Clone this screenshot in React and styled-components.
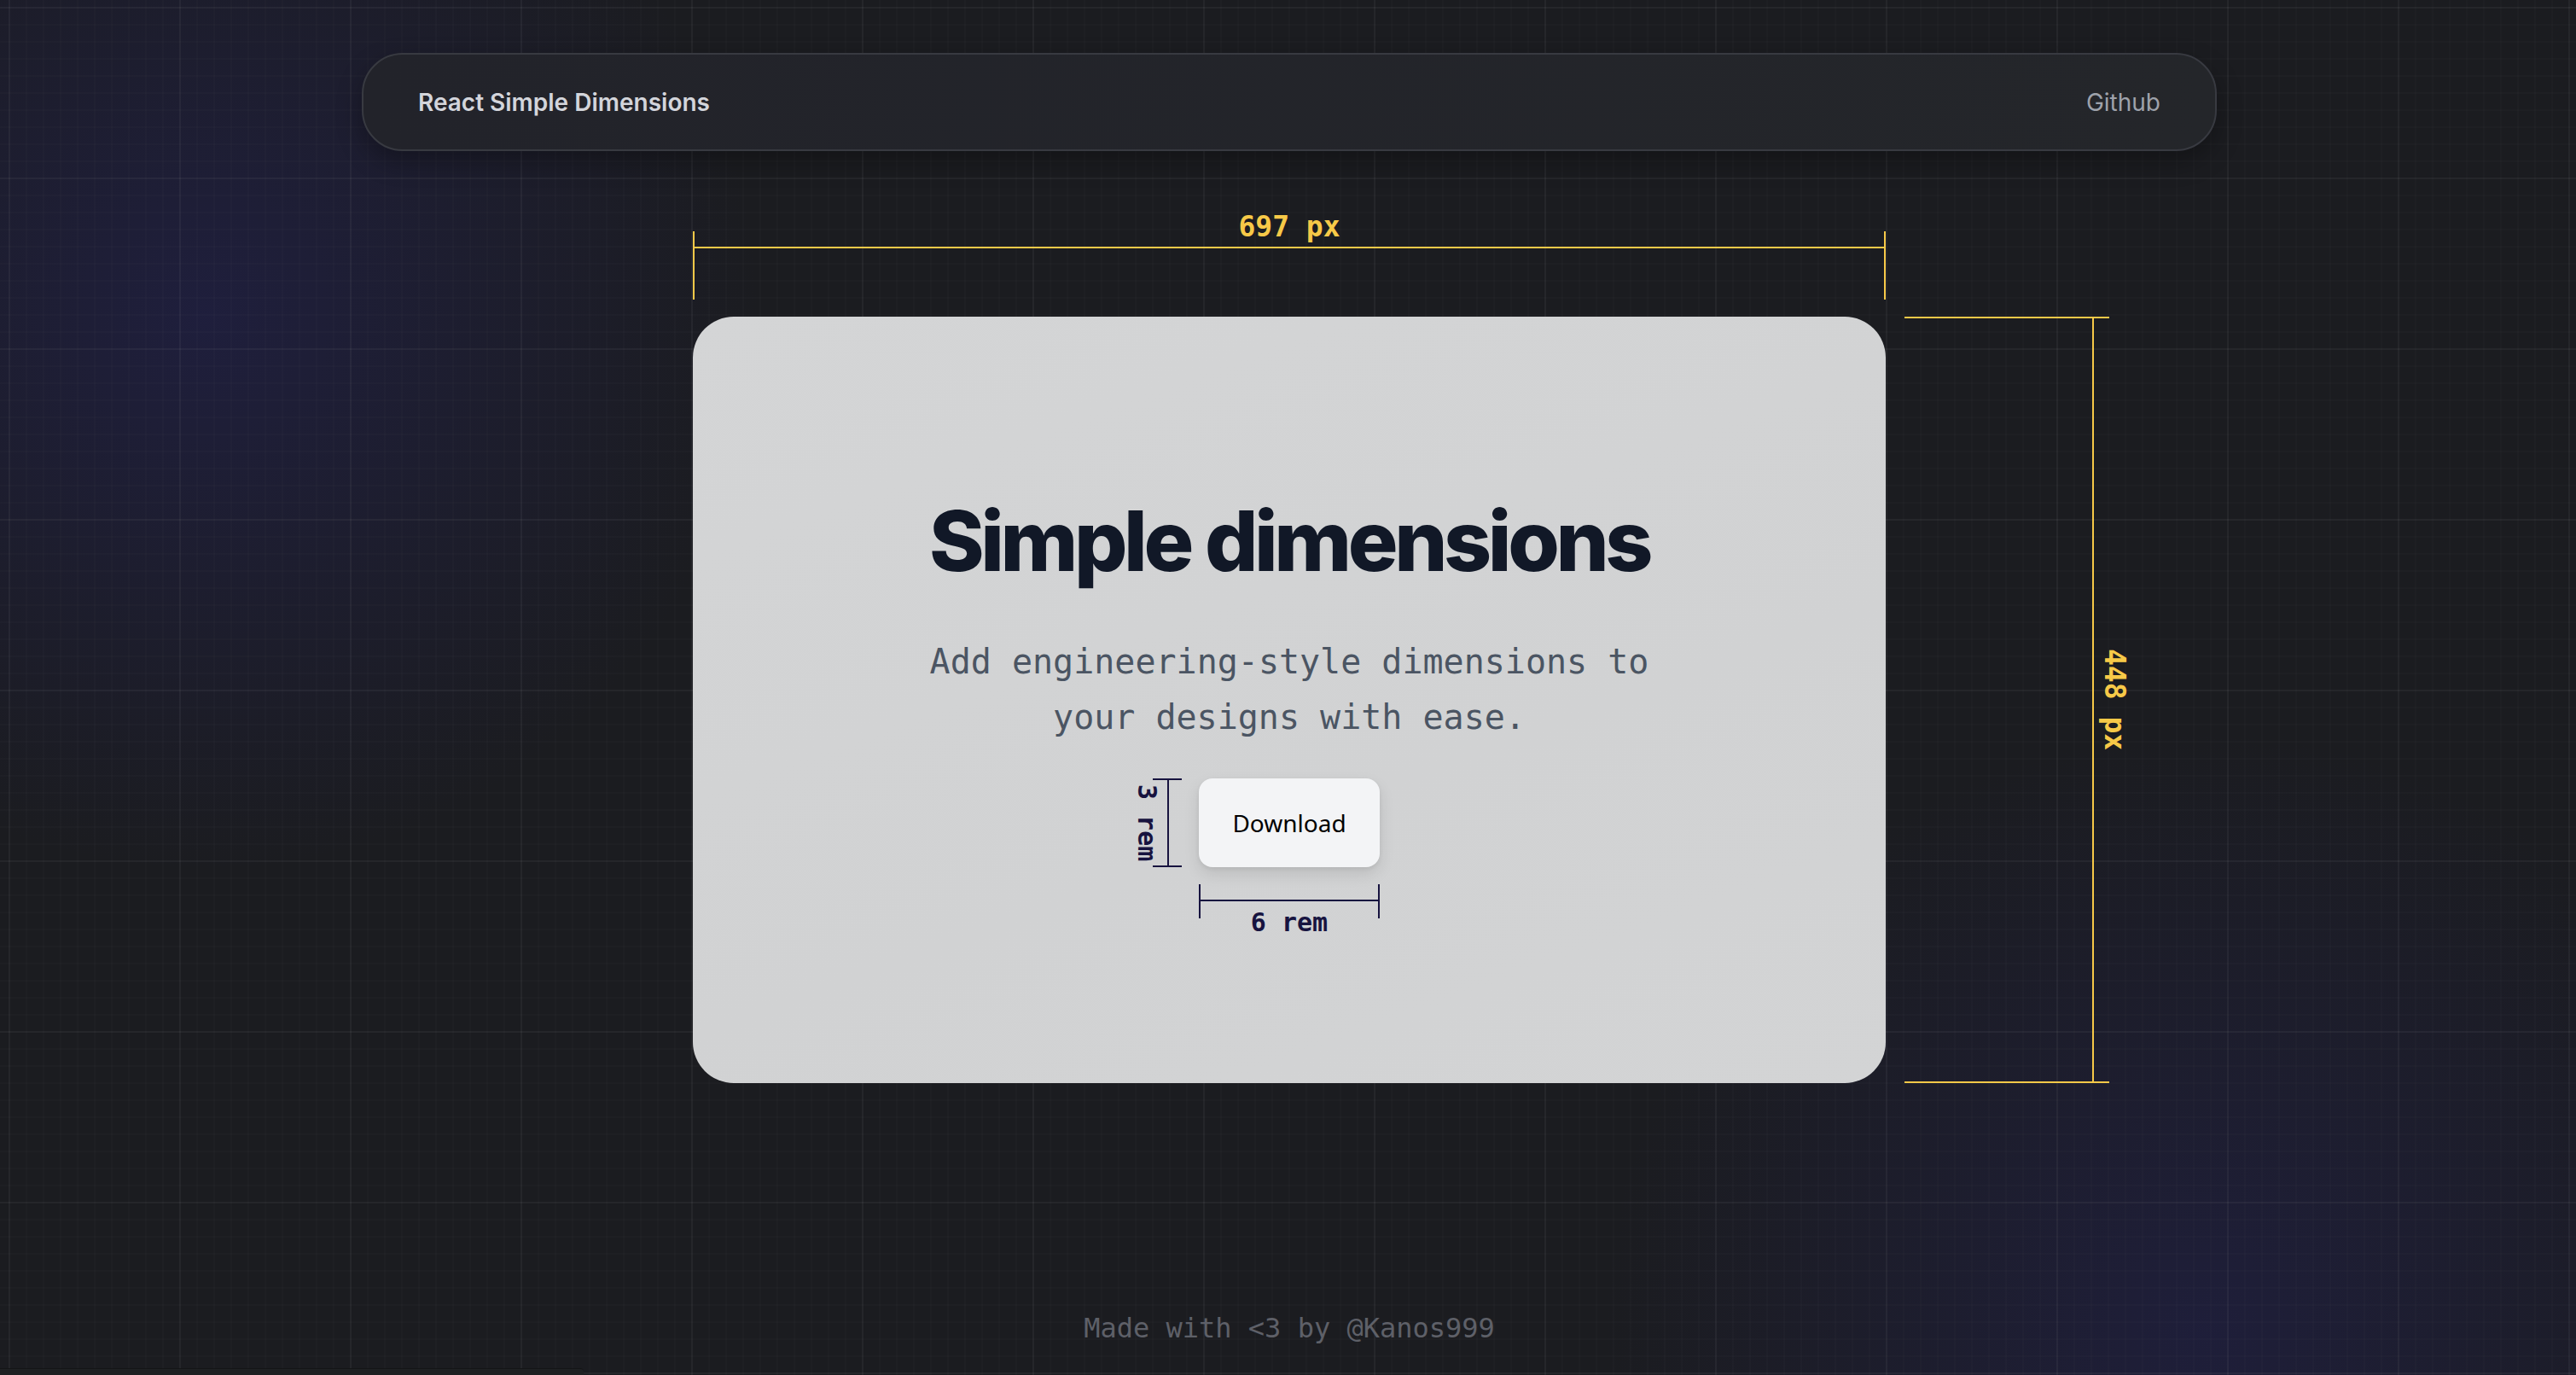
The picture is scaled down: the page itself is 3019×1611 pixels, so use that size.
import React from "react";
import styled, { createGlobalStyle } from "styled-components";

const YELLOW = "#f7c948";
const NAVY = "#17133f";
const MONO = `"DejaVu Sans Mono", "Liberation Mono", monospace`;

const GlobalStyle = createGlobalStyle`
    html, body {
        margin: 0;
        padding: 0;
    }
    body {
        background: #1b1c20;
    }
    * {
        box-sizing: border-box;
    }
`;

function App() {
    return (
        <>
            <GlobalStyle />
            <Page>
                <Navbar>
                    <Brand>React Simple Dimensions</Brand>
                    <NavLink href="#">Github</NavLink>
                </Navbar>

                <Showcase>
                    <TopDimension>
                        <TopLabel>697 px</TopLabel>
                        <HLine color={YELLOW} />
                    </TopDimension>

                    <Card>
                        <Title>Simple dimensions</Title>
                        <Subtitle>Add engineering-style dimensions to your designs with ease.</Subtitle>

                        <ButtonFigure>
                            <ButtonSideDim>
                                <RemLabel vertical>3 rem</RemLabel>
                                <VTicks>
                                    <VLine color={NAVY} offset={17} />
                                </VTicks>
                            </ButtonSideDim>

                            <DownloadButton>Download</DownloadButton>

                            <ButtonBottomDim>
                                <HTicks>
                                    <HLine color={NAVY} />
                                </HTicks>
                                <RemLabel>6 rem</RemLabel>
                            </ButtonBottomDim>
                        </ButtonFigure>
                    </Card>

                    <SideDimension>
                        <VLine color={YELLOW} offset={220} />
                        <SideLabel>448 px</SideLabel>
                    </SideDimension>
                </Showcase>

                <Footer>Made with &lt;3 by @Kanos999</Footer>
                <BottomSliver />
            </Page>
        </>
    );
}

export default App;

const Page = styled.div`
    position: relative;
    min-height: 1611px;
    overflow: hidden;
    padding: 62px 0 0 3px;
    background-color: #1b1c20;
    background-image:
        linear-gradient(to right, rgba(255, 255, 255, 0.03) 2px, transparent 2px),
        linear-gradient(to bottom, rgba(255, 255, 255, 0.03) 2px, transparent 2px),
        linear-gradient(to right, rgba(255, 255, 255, 0.013) 2px, transparent 2px),
        linear-gradient(to bottom, rgba(255, 255, 255, 0.013) 2px, transparent 2px),
        radial-gradient(circle 650px at 240px 370px, rgba(36, 34, 100, 0.42), transparent),
        radial-gradient(circle 700px at 2580px 1560px, rgba(36, 34, 100, 0.38), transparent);
    background-size: 200px 200px, 200px 200px, 20px 20px, 20px 20px, auto, auto;
    background-position: 10px 8px, 10px 8px, 10px 8px, 10px 8px, 0 0, 0 0;
`;

const Navbar = styled.nav`
    display: flex;
    align-items: center;
    justify-content: space-between;
    width: 2174px;
    height: 115px;
    margin: 0 auto;
    padding: 0 64px;
    border: 2px solid #383a41;
    border-radius: 48px;
    background: linear-gradient(to right, #22232a, #24262a);
    box-shadow: 0 12px 30px rgba(0, 0, 0, 0.3);
`;

const Brand = styled.span`
    font-family: Inter, "Noto Sans", sans-serif;
    font-size: 28px;
    font-weight: 600;
    color: #d3d5db;
`;

const NavLink = styled.a`
    font-family: Inter, "Noto Sans", sans-serif;
    font-size: 28px;
    font-weight: 400;
    color: #9ea2ab;
    text-decoration: none;
`;

const Showcase = styled.section`
    display: grid;
    grid-template-columns: 262px 1398px 262px;
    grid-template-rows: auto 898px;
    justify-content: center;
    margin-top: 94px;
`;

const TopDimension = styled.div`
    position: relative;
    display: flow-root;
    grid-column: 2;
    grid-row: 1;
    height: 80px;
    margin-bottom: 20px;
    border-left: 2px solid ${YELLOW};
    border-right: 2px solid ${YELLOW};
`;

const HLine = styled.div`
    height: 2px;
    margin-top: 18px;
    background: ${({ color }) => color};
`;

const VLine = styled.div`
    flex: none;
    width: 2px;
    margin-left: ${({ offset }) => offset}px;
    background: ${({ color }) => color};
`;

const TopLabel = styled.span`
    position: absolute;
    top: -22px;
    left: 0;
    right: 0;
    text-align: center;
    font-family: ${MONO};
    font-size: 33px;
    font-weight: 700;
    line-height: 1;
    color: ${YELLOW};
`;

const SideDimension = styled.div`
    display: flex;
    grid-column: 3;
    grid-row: 2;
    width: 240px;
    margin-left: 22px;
    border-top: 2px solid ${YELLOW};
    border-bottom: 2px solid ${YELLOW};
`;

const SideLabel = styled.span`
    align-self: center;
    margin-left: 8px;
    writing-mode: vertical-rl;
    white-space: nowrap;
    font-family: ${MONO};
    font-size: 33px;
    font-weight: 700;
    line-height: 1;
    color: ${YELLOW};
`;

const Card = styled.div`
    grid-column: 2;
    grid-row: 2;
    display: flex;
    flex-direction: column;
    align-items: center;
    padding-top: 214px;
    border-radius: 48px;
    background: linear-gradient(160deg, #d4d5d6, #d1d2d3 60%, #d3d4d5);
`;

const Title = styled.h1`
    margin: 0;
    font-family: Inter, "Noto Sans", sans-serif;
    font-size: 98px;
    font-weight: 800;
    line-height: 1;
    letter-spacing: -0.045em;
    color: #111827;
`;

const Subtitle = styled.p`
    max-width: 896px;
    margin: 60px 0 0;
    font-family: ${MONO};
    font-size: 40px;
    line-height: 65px;
    text-align: center;
    color: #4b5563;
`;

const ButtonFigure = styled.div`
    display: grid;
    grid-template-columns: 76px 212px 76px;
    grid-template-rows: 104px auto;
    margin-top: 39px;
`;

const ButtonSideDim = styled.div`
    display: flex;
    justify-content: flex-end;
    padding-right: 20px;
`;

const VTicks = styled.div`
    display: flex;
    width: 40px;
    border-top: 2px solid ${NAVY};
    border-bottom: 2px solid ${NAVY};
`;

const RemLabel = styled.span`
    font-family: ${MONO};
    font-size: 30px;
    font-weight: 700;
    line-height: 1;
    color: ${NAVY};
    white-space: nowrap;
    text-align: center;
    ${({ vertical }) =>
        vertical
            ? `
        writing-mode: vertical-rl;
        align-self: center;
        margin-right: -8px;
    `
            : `
        display: block;
        margin-top: -10px;
    `}
`;

const DownloadButton = styled.button`
    grid-column: 2;
    grid-row: 1;
    border: none;
    border-radius: 16px;
    background: #f3f4f6;
    box-shadow: 0 8px 18px rgba(0, 0, 0, 0.1), 0 2px 5px rgba(0, 0, 0, 0.06);
    font-family: "Noto Sans", sans-serif;
    font-size: 28px;
    color: #000;
    cursor: pointer;
`;

const ButtonBottomDim = styled.div`
    grid-column: 2;
    grid-row: 2;
    margin-top: 20px;
`;

const HTicks = styled.div`
    display: flow-root;
    height: 40px;
    border-left: 2px solid ${NAVY};
    border-right: 2px solid ${NAVY};
`;

const Footer = styled.footer`
    margin-top: 263px;
    font-family: ${MONO};
    font-size: 32px;
    line-height: 48px;
    text-align: center;
    color: #5e6068;
`;

const BottomSliver = styled.div`
    position: absolute;
    left: 0;
    bottom: 0;
    width: 684px;
    height: 8px;
    border-top: 1px solid #141517;
    border-top-right-radius: 4px;
    background: #1f2123;
`;
